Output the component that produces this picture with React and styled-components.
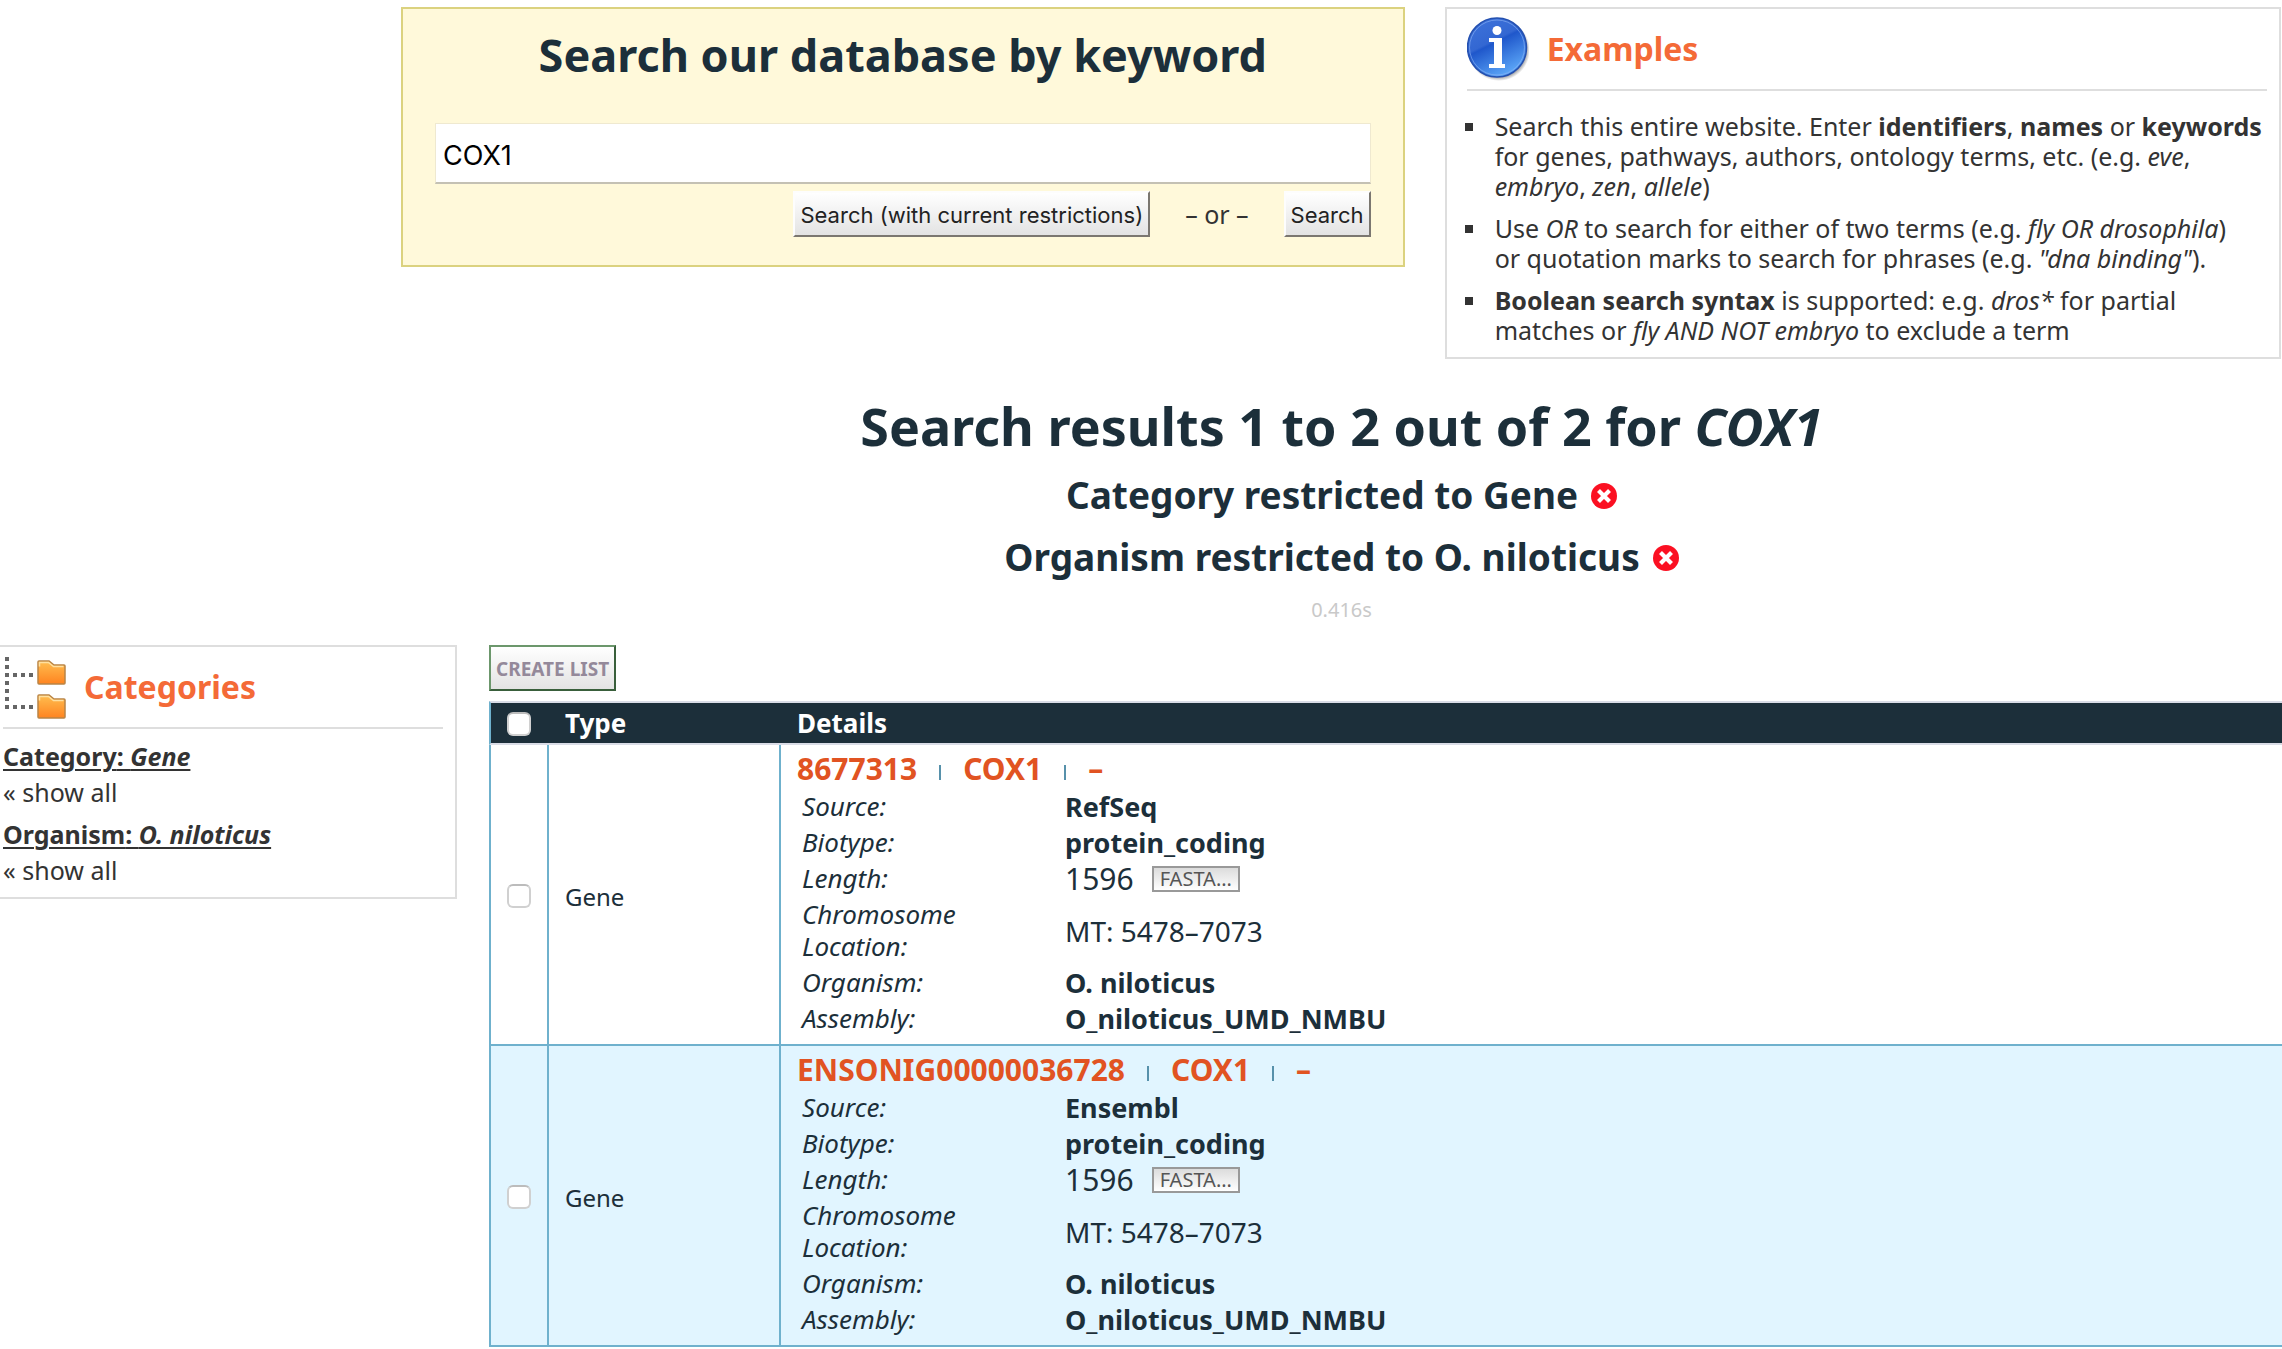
import React from 'react';
import styled, { createGlobalStyle } from 'styled-components';

const ink = '#1c2f3a';
const line = '#6fb1cd';
const sans = '"Noto Sans", "Open Sans", sans-serif';
const ui = 'Inter, "Liberation Sans", sans-serif';

const GlobalStyle = createGlobalStyle`
  * { box-sizing: border-box; }
  body {
    margin: 0;
    background: #fff;
    color: #333;
    font-family: ${sans};
    font-size: 25px;
  }
  h1, h2, h3, p, ul, dl, dd { margin: 0; padding: 0; }
`;

const TopSection = styled.section`
  display: grid;
  grid-template-columns: 6fr 5fr;
  gap: 40px;
  align-items: start;
  padding: 7px 1px 0 401px;
`;

const SearchBox = styled.form`
  padding: 16px 32px 28px;
  border: 2px solid #dbd27f;
  background: #fff9da;
`;

const SearchTitle = styled.h1`
  margin-bottom: 38px;
  color: ${ink};
  font-size: 45px;
  line-height: 60px;
  text-align: center;
`;

const SearchInput = styled.input`
  display: block;
  width: 100%;
  height: 61px;
  padding: 5px 7px 0;
  border: 1px solid #efe9d0;
  border-bottom: 2px solid #c4c1b4;
  border-radius: 0;
  outline: 0;
  background: #fff;
  color: #000;
  font: 27px ${ui};
`;

const SearchActions = styled.div`
  display: flex;
  align-items: center;
  justify-content: flex-end;
  gap: 35px;
  margin-top: 7px;
  line-height: 46px;
`;

const PushButton = styled.button`
  height: 46px;
  padding: 1px 5px 0;
  border: 2px solid;
  border-color: #fdfdfd #7b7770 #7b7770 #fdfdfd;
  border-radius: 0;
  background: linear-gradient(#fff, #e3e3e3);
  color: #222;
  font: 22px ${ui};
  white-space: nowrap;
`;

const CreateButton = styled(PushButton)`
  border-color: #6c976c #395f3b #395f3b #6c976c;
  color: #94899a;
  font: bold 19px ${sans};
  text-transform: uppercase;
`;

const Panel = styled.section`
  padding: 0 12px ${(p) => (p.$flush ? 9 : 12)}px ${(p) => (p.$flush ? 3 : 20)}px;
  border: 2px solid #dedede;
  border-left-width: ${(p) => (p.$flush ? 0 : 2)}px;
`;

const PanelHeader = styled.header`
  display: flex;
  align-items: center;
  gap: 18px;
  height: 82px;
  border-bottom: 2px solid #dedede;
`;

const PanelTitle = styled.h3`
  color: #f46a37;
  font-size: 32px;
  line-height: 40px;
`;

const Tips = styled.ul`
  display: grid;
  gap: 12px;
  margin: 20px 0 0 -2px;
  list-style: none;
  line-height: 30px;
`;

const Tip = styled.li`
  display: grid;
  grid-template-columns: 8px 1fr;
  column-gap: 22px;

  &::before {
    content: "";
    height: 8px;
    margin-top: 12px;
    background: #333;
  }
`;

const Summary = styled.section`
  padding: 37px 0 20px 401px;
  color: ${ink};
  text-align: center;
`;

const SummaryTitle = styled.h1`
  margin-bottom: 8px;
  font-size: 52px;
  line-height: 60px;
`;

const Restriction = styled.h2`
  font-size: 37px;
  line-height: 62px;
`;

const RemoveButton = styled.button`
  margin-left: 13px;
  padding: 0;
  border: 0;
  background: none;
  line-height: 0;
  vertical-align: baseline;
`;

const Elapsed = styled.p`
  margin-top: 7px;
  color: #c9c9c9;
  font-size: 20px;
  line-height: 30px;
`;

const BottomSection = styled.div`
  display: grid;
  grid-template-columns: 457px 1fr;
  gap: 32px;
  align-items: start;
`;

const Facet = styled.div`
  margin-top: ${(p) => (p.$first ? 9 : 6)}px;
  line-height: 36px;
`;

const FacetTitle = styled.div`
  font-weight: bold;
  text-decoration: underline;
  text-decoration-thickness: 2px;
  text-underline-offset: 3px;
`;

const ShowAll = styled.a`
  display: block;
  color: #333;
  text-decoration: none;
`;

const Results = styled.table`
  width: 100%;
  margin-top: 10px;
  border-spacing: 0;
  color: ${ink};
  table-layout: fixed;
`;

const HeadCell = styled.th`
  width: ${(p) => p.$width || 'auto'};
  height: 44px;
  padding: ${(p) => (p.$pick ? '2px 0 0' : '0 18px')};
  border: solid #d9dce6;
  border-width: 2px 0;
  border-left: ${(p) => (p.$pick ? `2px solid ${line}` : 0)};
  background: ${ink};
  color: #fff;
  font-size: 26px;
  line-height: 40px;
  text-align: ${(p) => (p.$pick ? 'center' : 'left')};
`;

const Row = styled.tr`
  background: ${(p) => (p.$alt ? '#e1f5ff' : '#fff')};
`;

const Cell = styled.td`
  padding: 5px 16px 8px;
  border-left: 2px solid ${line};
  border-bottom: 2px solid ${line};
`;

const PickCell = styled(Cell)`
  padding: 2px 0 0;
`;

const TypeCell = styled(Cell)`
  padding: 4px 16px 0;
  font-size: 24px;
`;

const Check = styled.input`
  display: block;
  width: 24px;
  height: 24px;
  margin: 0 auto;
  border: 2px solid #d0d0d0;
  border-top-color: #bcbcbc;
  border-radius: 6px;
  appearance: none;
  background: #fff;
`;

const Identity = styled.div`
  display: flex;
  align-items: baseline;
  gap: 22px;
  font-size: 30px;
  font-weight: bold;
  line-height: 38px;
`;

const RecordLink = styled.a`
  color: #e15322;
  text-decoration: none;
`;

const Bar = styled.span`
  width: 2px;
  height: 15px;
  background: #5791ab;
`;

const Fields = styled.dl`
  display: grid;
  grid-template-columns: 240px 1fr;
  column-gap: 23px;
  align-items: center;
  padding-left: 5px;
  line-height: 32px;
`;

const FieldName = styled.dt`
  padding: 2px 0;
  font-size: 26px;
  font-style: italic;
`;

const FieldValue = styled.dd`
  display: flex;
  align-items: center;
  gap: 18px;
  padding-top: 2px;
  font-size: ${(p) => p.$size || 27}px;
  font-weight: ${(p) => (p.$size ? 'normal' : 'bold')};
`;

const FastaButton = styled.button`
  height: 26px;
  padding: 0 6px;
  border: 2px solid #999;
  border-radius: 0;
  background: linear-gradient(#dcdcdc, #fff);
  color: #555;
  font: 20px ${sans};
  line-height: 20px;
`;

function InfoIcon() {
  return (
    <svg width="62" height="64" viewBox="0 0 62 64" aria-hidden="true">
      <defs>
        <linearGradient id="info-fill" x1="0" y1="0" x2="0.5" y2="1">
          <stop offset="0" stopColor="#3f74dc" />
          <stop offset="0.48" stopColor="#3367d2" />
          <stop offset="0.52" stopColor="#1f57cb" />
          <stop offset="1" stopColor="#58a2f5" />
        </linearGradient>
        <radialGradient id="info-shadow">
          <stop offset="0.88" stopColor="#888" stopOpacity="0.7" />
          <stop offset="1" stopColor="#888" stopOpacity="0" />
        </radialGradient>
      </defs>
      <circle cx="32" cy="33" r="31" fill="url(#info-shadow)" />
      <circle cx="30" cy="30.500" r="29.500" fill="url(#info-fill)" stroke="#2450b0" strokeWidth="1.500" />
      <circle cx="30" cy="30.500" r="27.500" fill="none" stroke="#8fb4f4" strokeOpacity="0.6" strokeWidth="1" />
      <circle cx="30" cy="13.500" r="4.500" fill="#fff" />
      <path d="M22 21h13v26h3v4H22v-4h5V25h-5z" fill="#fff" />
    </svg>
  );
}

function Folder({ y }) {
  return (
    <g transform={`translate(34 ${y})`}>
      <path d="M1 23V2q0-1 1-1h10l5 4h10q1 0 1 1v17q0 1-1 1H2q-1 0-1-1z" fill="url(#folder-fill)" stroke="#b98445" strokeWidth="1.500" />
      <path d="M2.500 6.500V2.500h9l5 4h10" fill="none" stroke="#ffe0a0" strokeWidth="1.500" />
    </g>
  );
}

function TreeIcon() {
  const spine = [2, 10, 18, 26, 34, 42, 50];
  return (
    <svg width="63" height="64" viewBox="0 0 63 64" aria-hidden="true">
      <defs>
        <linearGradient id="folder-fill" x1="0" y1="0" x2="0" y2="1">
          <stop offset="0" stopColor="#ffbe50" />
          <stop offset="1" stopColor="#ff8420" />
        </linearGradient>
      </defs>
      <g fill="#666">
        {spine.map((y) => <rect key={y} x="2" y={y} width="4" height="4" />)}
        {[10, 18, 26].map((x) => <rect key={x} x={x} y="18" width="4" height="4" />)}
        {[10, 18, 26].map((x) => <rect key={x} x={x} y="50" width="4" height="4" />)}
      </g>
      <Folder y={5} />
      <Folder y={39} />
    </svg>
  );
}

function RemoveIcon() {
  return (
    <svg width="26" height="26" viewBox="0 0 26 26" aria-hidden="true">
      <circle cx="13" cy="13" r="13" fill="#fb1022" />
      <path d="M7.500 7.500l11 11M18.500 7.500l-11 11" stroke="#fff" strokeWidth="4.200" />
    </svg>
  );
}

const facets = [
  { name: 'Category', value: 'Gene' },
  { name: 'Organism', value: 'O. niloticus' },
];

const records = [
  { id: '8677313', source: 'RefSeq' },
  { id: 'ENSONIG00000036728', source: 'Ensembl' },
];

function Record({ id, source, alt }) {
  return (
    <Row $alt={alt}>
      <PickCell><Check type="checkbox" aria-label={`Select ${id}`} /></PickCell>
      <TypeCell>Gene</TypeCell>
      <Cell>
        <Identity>
          <RecordLink href="#record">{id}</RecordLink>
          <Bar />
          <RecordLink href="#record">COX1</RecordLink>
          <Bar />
          <RecordLink href="#record">–</RecordLink>
        </Identity>
        <Fields>
          <FieldName>Source:</FieldName>
          <FieldValue>{source}</FieldValue>
          <FieldName>Biotype:</FieldName>
          <FieldValue>protein_coding</FieldValue>
          <FieldName>Length:</FieldName>
          <FieldValue $size={30}>1596 <FastaButton type="button">FASTA...</FastaButton></FieldValue>
          <FieldName>Chromosome Location:</FieldName>
          <FieldValue $size={28}>MT: 5478–7073</FieldValue>
          <FieldName>Organism:</FieldName>
          <FieldValue>O. niloticus</FieldValue>
          <FieldName>Assembly:</FieldName>
          <FieldValue>O_niloticus_UMD_NMBU</FieldValue>
        </Fields>
      </Cell>
    </Row>
  );
}

export default function App() {
  return (
    <>
      <GlobalStyle />
      <TopSection>
        <SearchBox onSubmit={(e) => e.preventDefault()}>
          <SearchTitle>Search our database by keyword</SearchTitle>
          <SearchInput type="text" aria-label="Search keyword" defaultValue="COX1" />
          <SearchActions>
            <PushButton type="submit">Search (with current restrictions)</PushButton>
            <span>– or –</span>
            <PushButton type="submit">Search</PushButton>
          </SearchActions>
        </SearchBox>
        <Panel>
          <PanelHeader>
            <InfoIcon />
            <PanelTitle>Examples</PanelTitle>
          </PanelHeader>
          <Tips>
            <Tip>
              <span>
                Search this entire website. Enter <b>identifiers</b>, <b>names</b> or <b>keywords</b> for
                genes, pathways, authors, ontology terms, etc. (e.g. <i>eve</i>, <i>embryo</i>, <i>zen</i>, <i>allele</i>)
              </span>
            </Tip>
            <Tip>
              <span>
                Use <i>OR</i> to search for either of two terms (e.g. <i>fly OR drosophila</i>)
                <br />
                or quotation marks to search for phrases (e.g. <i>"dna binding"</i>).
              </span>
            </Tip>
            <Tip>
              <span>
                <b>Boolean search syntax</b> is supported: e.g. <i>dros*</i> for partial matches
                or <i>fly AND NOT embryo</i> to exclude a term
              </span>
            </Tip>
          </Tips>
        </Panel>
      </TopSection>

      <Summary>
        <SummaryTitle>Search results 1 to 2 out of 2 for <i>COX1</i></SummaryTitle>
        {facets.map((f) => (
          <Restriction key={f.name}>
            {f.name} restricted to {f.value}
            <RemoveButton type="button" aria-label={`Remove ${f.name} restriction`}><RemoveIcon /></RemoveButton>
          </Restriction>
        ))}
        <Elapsed>0.416s</Elapsed>
      </Summary>

      <BottomSection>
        <Panel $flush>
          <PanelHeader>
            <TreeIcon />
            <PanelTitle>Categories</PanelTitle>
          </PanelHeader>
          {facets.map((f, i) => (
            <Facet key={f.name} $first={i === 0}>
              <FacetTitle>{f.name}: <i>{f.value}</i></FacetTitle>
              <ShowAll href="#all">« show all</ShowAll>
            </Facet>
          ))}
        </Panel>
        <main>
          <CreateButton type="button">Create List</CreateButton>
          <Results>
            <thead>
              <tr>
                <HeadCell $pick $width="58px"><Check type="checkbox" aria-label="Select all" /></HeadCell>
                <HeadCell $width="232px">Type</HeadCell>
                <HeadCell>Details</HeadCell>
              </tr>
            </thead>
            <tbody>
              {records.map((r, i) => <Record key={r.id} {...r} alt={i % 2 === 1} />)}
            </tbody>
          </Results>
        </main>
      </BottomSection>
    </>
  );
}
